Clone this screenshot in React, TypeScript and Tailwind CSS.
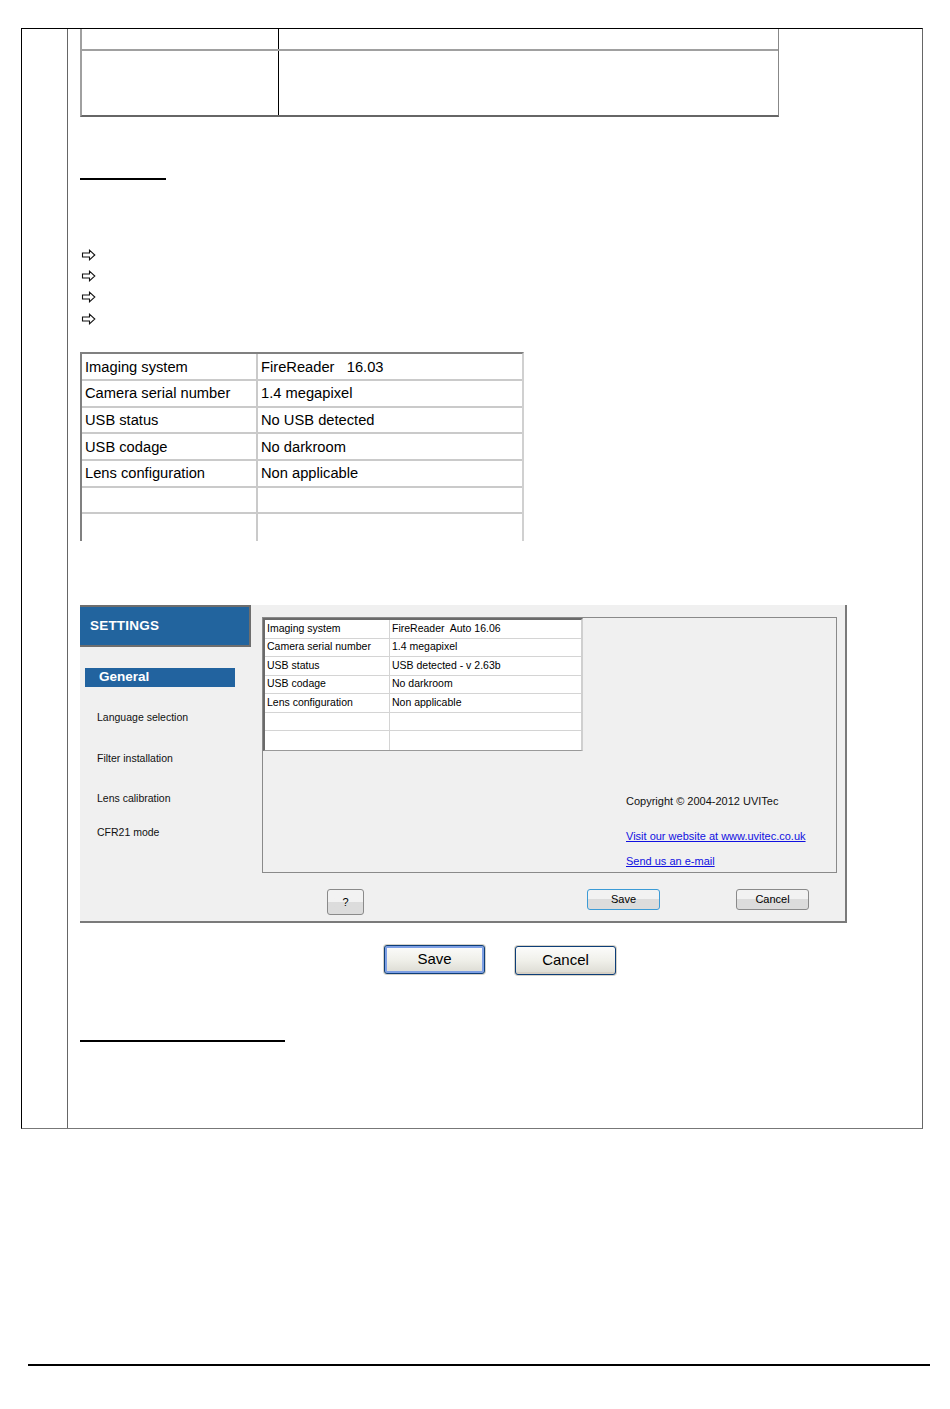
import React from "react";

const SANS = "font-['Liberation_Sans',Arial,sans-serif]";

const infoRows: [string, string][] = [
  ["Imaging system", "FireReader   16.03"],
  ["Camera serial number", "1.4 megapixel"],
  ["USB status", "No USB detected"],
  ["USB codage", "No darkroom"],
  ["Lens configuration", "Non applicable"],
  ["", ""],
  ["", ""],
];

const appRows: [string, string][] = [
  ["Imaging system", "FireReader  Auto 16.06"],
  ["Camera serial number", "1.4 megapixel"],
  ["USB status", "USB detected - v 2.63b"],
  ["USB codage", "No darkroom"],
  ["Lens configuration", "Non applicable"],
  ["", ""],
  ["", ""],
];

function Arrow() {
  return (
    <svg width="15" height="12" viewBox="0 0 15 12" fill="none" aria-hidden>
      <path
        d="M1.5 4H8.5V1.2L13.8 6L8.5 10.8V8H1.5Z"
        stroke="#111"
        strokeWidth="1.1"
        strokeLinejoin="miter"
      />
    </svg>
  );
}

function TopTable() {
  return (
    <div className="flex h-[88px] w-[699px] flex-col border-l-2 border-r border-b-2 border-l-[#a0a0a0] border-r-[#888] border-b-[#666]">
      <div className="flex h-[22px] border-b-2 border-[#a0a0a0]">
        <div className="w-[197px] border-r border-black" />
        <div className="flex-1" />
      </div>
      <div className="flex flex-1">
        <div className="w-[197px] border-r border-black" />
        <div className="flex-1" />
      </div>
    </div>
  );
}

function InfoTable() {
  return (
    <div className={`w-[444px] border-t-2 border-l-2 border-r-2 border-t-[#808080] border-l-[#808080] border-r-[#d0d0d0] ${SANS} text-[14.7px] text-black`}>
      {infoRows.map(([k, v], i) => (
        <div
          key={i}
          className={`flex h-[26.7px] items-center ${i < infoRows.length - 1 ? "border-b-2 border-[#cacaca]" : ""}`}
        >
          <div className="flex h-full w-[176px] items-center border-r-2 border-[#cacaca] pl-[3px]">{k}</div>
          <div className="flex-1 whitespace-pre pl-[3px]">{v}</div>
        </div>
      ))}
    </div>
  );
}

function SmallButton({
  children,
  className,
}: {
  children: React.ReactNode;
  className: string;
}) {
  return (
    <button
      type="button"
      className={`flex items-center justify-center rounded-[3px] bg-gradient-to-b from-[#f2f2f2] from-50% to-[#dcdcdc] to-50% text-[11px] text-black ${className}`}
    >
      {children}
    </button>
  );
}

function SettingsShot() {
  return (
    <div className={`flex h-[318px] w-[767px] border-r-2 border-b-2 border-[#7a7a7a] bg-[#f0f0f0] ${SANS}`}>
      {/* left menu */}
      <div className="flex w-[171px] flex-col">
        <div className="flex h-[42px] items-center border-t-2 border-r-2 border-b-2 border-[#6e6e6e] bg-[#22649e] pl-[10px] text-[13.5px] font-bold tracking-[0.2px] text-white">
          SETTINGS
        </div>
        <div className="ml-[5px] mt-[21px] flex h-[19px] w-[150px] items-center bg-[#22639f] pl-[14px] text-[13.5px] font-bold text-white">
          General
        </div>
        <div className="ml-[17px] flex flex-col text-[10.5px] text-[#111]">
          <div className="mt-[23px] h-[14px] leading-[14px]">Language selection</div>
          <div className="mt-[27px] h-[14px] leading-[14px]">Filter installation</div>
          <div className="mt-[26px] h-[14px] leading-[14px]">Lens calibration</div>
          <div className="mt-[20px] h-[14px] leading-[14px]">CFR21 mode</div>
        </div>
      </div>

      {/* right area */}
      <div className="flex flex-1 flex-col pt-[12px]">
        <div className="ml-[11px] flex h-[256px] w-[575px] flex-col border border-[#8a8a8a]">
          <div className="w-[320px] border-t-2 border-l-2 border-r-2 border-b border-t-[#6a6a6a] border-l-[#6a6a6a] border-r-[#cfcfcf] border-b-[#9a9a9a] bg-white text-[10.5px] text-black">
            {appRows.map(([k, v], i) => (
              <div
                key={i}
                className={`flex h-[18.5px] items-center ${i < appRows.length - 1 ? "border-b border-[#d4d4d4]" : ""}`}
              >
                <div className="flex h-full w-[125px] items-center border-r border-[#d4d4d4] pl-[2px]">{k}</div>
                <div className="flex-1 whitespace-pre pl-[2px]">{v}</div>
              </div>
            ))}
          </div>
          <div className="ml-[363px] mt-[43px] flex flex-col text-[11px]">
            <div className="h-[14px] leading-[14px] text-[#111]">Copyright © 2004-2012 UVITec</div>
            <a className="mt-[21px] h-[14px] leading-[14px] text-[#1010e0] underline">
              Visit our website at www.uvitec.co.uk
            </a>
            <a className="mt-[11px] h-[14px] leading-[14px] text-[#1010e0] underline">
              Send us an e-mail
            </a>
          </div>
        </div>

        <div className="mt-[16px] flex items-start">
          <SmallButton className="ml-[76px] h-[26px] w-[37px] border border-[#8a8a8a] text-[#5a2a6a]">?</SmallButton>
          <SmallButton className="ml-[223px] h-[21px] w-[73px] border border-[#3c9bd6] bg-gradient-to-b from-[#eaf6fd] to-[#d0e6f3]">
            Save
          </SmallButton>
          <SmallButton className="ml-[76px] h-[21px] w-[73px] border border-[#8a8a8a]">Cancel</SmallButton>
        </div>
      </div>
    </div>
  );
}

function XpButton({ label, primary }: { label: string; primary?: boolean }) {
  return (
    <div className="rounded-[4px] bg-[#d6d3ca] p-px">
      <button
        type="button"
        className={`flex h-[29px] w-[101px] items-center justify-center rounded-[3px] border border-[#0d3e78] bg-gradient-to-b from-[#fcfcfb] via-[#f0f0ea] to-[#dcdbd3] ${SANS} text-[15px] text-black ${
          primary ? "shadow-[inset_0_0_0_2px_#7d9fe4]" : "shadow-[inset_0_-2px_0_#d6d0c5]"
        }`}
      >
        {label}
      </button>
    </div>
  );
}

export default function App() {
  return (
    <div className="h-[1409px] w-[950px] overflow-hidden bg-white">
      <div className="pl-[21px] pt-[28px]">
        <div className="flex h-[1101px] w-[902px] border border-black border-b-[#777] border-r-[#666]">
          <div className="w-[46px] border-r border-[#666]" />
          <div className="flex flex-1 flex-col pl-[12px]">
            <TopTable />

            <div className="mt-[61px] h-[2px] w-[86px] bg-black" />

            <div className="mt-[64px] flex flex-col">
              {[0, 1, 2, 3].map((i) => (
                <div key={i} className="flex h-[21.3px] items-center pl-px">
                  <Arrow />
                </div>
              ))}
            </div>

            <div className="mt-[23px]">
              <InfoTable />
            </div>

            <div className="mt-[64px]">
              <SettingsShot />
            </div>

            <div className="mt-[21px] flex h-[31px] items-start gap-[28px] pl-[303px]">
              <XpButton label="Save" primary />
              <div className="mt-px">
                <XpButton label="Cancel" />
              </div>
            </div>

            <div className="mt-[65px] h-[2px] w-[205px] bg-black" />
          </div>
        </div>
      </div>

      <div className="ml-[28px] mt-[235px] h-[2px] w-[902px] bg-black" />
    </div>
  );
}
